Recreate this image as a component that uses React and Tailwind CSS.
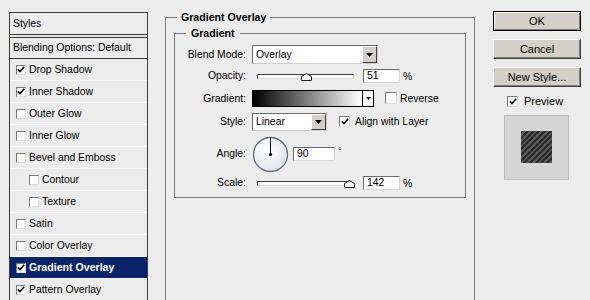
import React from "react";

const styleRows = [
  { label: "Drop Shadow", on: true },
  { label: "Inner Shadow", on: true },
  { label: "Outer Glow" },
  { label: "Inner Glow" },
  { label: "Bevel and Emboss" },
  { label: "Contour", sub: true },
  { label: "Texture", sub: true },
  { label: "Satin" },
  { label: "Color Overlay" },
  { label: "Gradient Overlay", on: true, active: true },
  { label: "Pattern Overlay", on: true },
];

function Check({ on, size = "w-[11px] h-[11px]" }) {
  return (
    <span
      className={`${size} shrink-0 flex items-center justify-center bg-white border border-t-[#7a7a7a] border-l-[#7a7a7a] border-b-[#dcdcdc] border-r-[#dcdcdc]`}
    >
      {on && (
        <svg width="8" height="7" viewBox="0 0 8 7">
          <path d="M0.8 3.4 L3 5.6 L7.2 0.8" fill="none" stroke="#000" strokeWidth="1.6" />
        </svg>
      )}
    </span>
  );
}

function ArrowBtn({ className = "" }) {
  return (
    <span
      className={`h-full flex items-center justify-center bg-[#d4d0c8] border border-t-white border-l-white border-b-[#404040] border-r-[#404040] ${className}`}
    >
      <svg width="7" height="4" viewBox="0 0 7 4">
        <path d="M0 0 H7 L3.5 4 Z" fill="#000" />
      </svg>
    </span>
  );
}

function Select({ value, width }) {
  return (
    <div
      className={`${width} h-full flex bg-white border border-t-[#6a6a6a] border-l-[#6a6a6a] border-b-[#d0d0d0] border-r-[#d0d0d0]`}
    >
      <span className="flex-1 flex items-center pl-[3px]">{value}</span>
      <ArrowBtn className="w-[15px]" />
    </div>
  );
}

function Slider({ width, pos }) {
  return (
    <div className={`relative ${width} h-[5px] bg-white border border-t-[#404040] border-l-[#404040] border-b-[#d8d8d8] border-r-[#d8d8d8]`}>
      <svg
        className="absolute top-[-2px]"
        style={{ left: pos }}
        width="11"
        height="8"
        viewBox="0 0 11 8"
      >
        <path d="M0.5 7.5 V3.5 L5.5 0.5 L10.5 3.5 V7.5 Z" fill="#fff" stroke="#222" />
      </svg>
    </div>
  );
}

function Field({ value, width = "w-[37px]" }) {
  return (
    <div
      className={`${width} h-full flex items-center pl-[3px] bg-white border border-t-[#6a6a6a] border-l-[#6a6a6a] border-b-[#d8d8d8] border-r-[#d8d8d8]`}
    >
      {value}
    </div>
  );
}

function Row({ label, h, mt, children }) {
  return (
    <div className={`flex items-center ${h} ${mt}`}>
      <span className="w-[71px] text-right">{label}</span>
      <div className="ml-[6px] h-full flex items-center">{children}</div>
    </div>
  );
}

function Button({ children, primary }) {
  return (
    <div
      className={`w-[88px] h-[20px] flex items-center justify-center text-[11px] bg-[#d4d0c8] border ${
        primary
          ? "border-black shadow-[inset_1px_1px_0_#fff,inset_-1px_-1px_0_#808080]"
          : "border-t-white border-l-white border-b-[#404040] border-r-[#404040] shadow-[inset_-1px_-1px_0_#808080]"
      }`}
    >
      {children}
    </div>
  );
}

export default function App() {
  return (
    <div className="w-[590px] h-[300px] overflow-hidden bg-[#ececec] flex items-start text-black text-[10.4px] font-['Liberation_Sans',Arial,sans-serif]">
      {/* styles list */}
      <div className="ml-[9px] mt-[12px] w-[139px] h-[300px] border border-[#3c3c3c] border-b-0 bg-[#ececec]">
        <div className="h-[22px] flex items-center pl-[3px] border-b border-[#3c3c3c]">Styles</div>
        <div className="h-[2px] bg-[#e4e4e4]" />
        <div className="h-[22px] flex items-center pl-[3px] border-t border-b border-[#3c3c3c]">
          Blending Options: Default
        </div>
        {styleRows.map((r) => (
          <div
            key={r.label}
            className={`h-[22px] flex items-center gap-[3px] border-b border-[#f8f8f8] ${
              r.sub ? "pl-[19px]" : "pl-[6px]"
            } ${r.active ? "bg-[#0a246a] text-white font-bold text-[10.6px]" : ""}`}
          >
            <Check on={r.on} size="w-[10px] h-[10px]" />
            <span>{r.label}</span>
          </div>
        ))}
      </div>

      {/* gradient overlay group */}
      <fieldset className="ml-[17px] mt-[11px] w-[310px] h-[300px] border border-[#7a7a7a]">
        <legend className="ml-[11px] px-[4px] font-bold text-[10.6px] leading-[13px]">Gradient Overlay</legend>
        <fieldset className="ml-[8px] mt-[3px] w-[292px] h-[171px] border border-[#7a7a7a]">
          <legend className="ml-[11px] px-[5px] font-bold text-[10.6px] leading-[13px]">Gradient</legend>

          <Row label="Blend Mode:" h="h-[19px]" mt="mt-[5px]">
            <Select value="Overlay" width="w-[126px]" />
          </Row>

          <Row label="Opacity:" h="h-[14px]" mt="mt-[5px]">
            <div className="ml-[5px]">
              <Slider width="w-[97px]" pos="43px" />
            </div>
            <div className="ml-[9px] h-full">
              <Field value="51" />
            </div>
            <span className="ml-[3px] self-start">%</span>
          </Row>

          <Row label="Gradient:" h="h-[17px]" mt="mt-[7px]">
            <div className="h-full flex">
              <div className="w-[111px] h-full border border-black bg-[linear-gradient(to_right,#000,#fff)]" />
              <span className="w-[11px] h-full flex items-center justify-center bg-white border border-l-0 border-black">
                <svg width="5" height="3" viewBox="0 0 5 3">
                  <path d="M0 0 H5 L2.5 3 Z" fill="#000" />
                </svg>
              </span>
            </div>
            <div className="ml-[11px] flex items-center gap-[3px]">
              <Check size="w-[12px] h-[12px]" />
              <span>Reverse</span>
            </div>
          </Row>

          <Row label="Style:" h="h-[18px]" mt="mt-[6px]">
            <Select value="Linear" width="w-[75px]" />
            <div className="ml-[12px] flex items-center gap-[5px]">
              <Check on size="w-[11px] h-[11px]" />
              <span>Align with Layer</span>
            </div>
          </Row>

          <Row label="Angle:" h="h-[36px]" mt="mt-[5px]">
            <svg width="37" height="37" viewBox="0 0 37 37">
              <defs>
                <radialGradient id="dial" cx="0.4" cy="0.35" r="0.7">
                  <stop offset="0" stopColor="#ffffff" />
                  <stop offset="1" stopColor="#dfe4ea" />
                </radialGradient>
              </defs>
              <circle cx="18.5" cy="18.5" r="17" fill="url(#dial)" stroke="#5f6c7e" strokeWidth="1.3" />
              <line x1="18.5" y1="18.5" x2="18.5" y2="2" stroke="#000" strokeWidth="1" />
              <circle cx="18.5" cy="18.5" r="1.6" fill="#000" />
            </svg>
            <div className="ml-[4px] h-[14px]">
              <Field value="90" width="w-[42px]" />
            </div>
            <span className="ml-[3px] self-start mt-[9px] text-[9px]">°</span>
          </Row>

          <Row label="Scale:" h="h-[14px]" mt="mt-[4px]">
            <div className="ml-[5px]">
              <Slider width="w-[94px]" pos="86px" />
            </div>
            <div className="ml-[12px] h-full">
              <Field value="142" />
            </div>
            <span className="ml-[3px] self-start">%</span>
          </Row>
        </fieldset>
      </fieldset>

      {/* buttons and preview */}
      <div className="ml-[18px] mt-[11px] flex flex-col">
        <Button primary>OK</Button>
        <div className="mt-[8px]">
          <Button>Cancel</Button>
        </div>
        <div className="mt-[8px]">
          <Button>New Style...</Button>
        </div>
        <div className="mt-[6px] ml-[14px] flex items-center gap-[6px] text-[11px]">
          <Check on size="w-[11px] h-[11px]" />
          <span>Preview</span>
        </div>
        <div className="mt-[5px] ml-[11px] w-[65px] h-[65px] flex items-center justify-center bg-[#d5d5d5] border border-[#bdbdbd]">
          <div className="w-[31px] h-[32px] bg-[repeating-linear-gradient(135deg,#2a2a2a_0px,#2a2a2a_2px,#5a5a5a_2px,#5a5a5a_4px)]" />
        </div>
      </div>
    </div>
  );
}
